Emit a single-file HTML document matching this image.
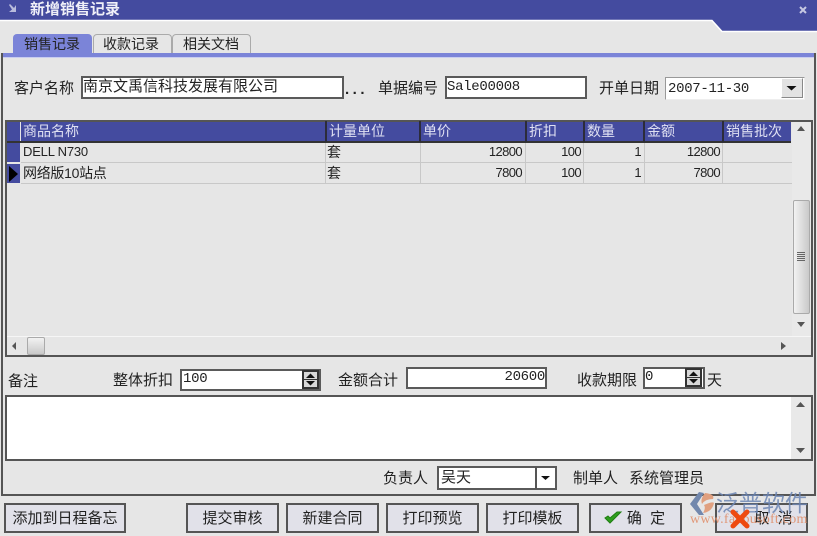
<!DOCTYPE html>
<html lang="zh"><head><meta charset="utf-8"><style>
html,body{margin:0;padding:0;background:#e6e6e6}
body{width:817px;height:536px;position:relative;overflow:hidden;background:#e6e6e6;font-family:"Liberation Sans","WenQuanYi Zen Hei","Noto Sans CJK SC",sans-serif;font-size:15px;color:#222}
#w{position:absolute;left:0;top:0;width:817px;height:536px;overflow:hidden;filter:blur(.3px)}
.a{position:absolute;box-sizing:border-box}
.t{position:absolute;white-space:nowrap;line-height:16px;height:16px}
.f{position:absolute;box-sizing:border-box;background:#fff;border:2px solid #5a5a5a}
.m{font-family:'Liberation Mono',monospace;font-size:14px;letter-spacing:-.3px}
.hd{position:absolute;top:122px;height:19px;background:#444b9f;color:#dfe0f2;font-size:14px;line-height:18px;padding-left:2px;box-sizing:border-box;white-space:nowrap;overflow:hidden}
.hs{position:absolute;top:121px;width:2px;height:21px;background:#2c2c3a}
.c{position:absolute;font-size:14px;line-height:20px;height:20px;white-space:nowrap;color:#222}
.e{font-size:13px;letter-spacing:-.2px}
.r{text-align:right;font-size:13px;letter-spacing:-.6px}
.b{position:absolute;top:503px;height:30px;box-sizing:border-box;background:#e1e1e9;border:2px solid #555;text-align:center;font-size:15px;line-height:27px;color:#222;white-space:nowrap}
.sp{position:absolute;width:17px;height:19px;background:#d8d8d8;border:2px solid #333;box-sizing:border-box}
</style></head><body><div id="w">
<svg class="a" style="left:0;top:0" width="817" height="34"><polygon points="0,0 817,0 817,31 722,31 712,20 0,20" fill="#444b9f"/><polyline points="0,20.5 712,20.5 722,31.5 817,31.5" fill="none" stroke="#fff" stroke-width="1.5"/>
<path d="M10 4 L14 8 L16 5 L16 12 L9 12 L12 9.5 L9 5Z" fill="#b9bcdc"/><path d="M800 7 L806 13 M806 7 L800 13" stroke="#c6c8e2" stroke-width="2"/></svg>
<div class="t" style="left:30px;top:2px;color:#f0f0f8;font-weight:bold;font-size:15px">新增销售记录</div>

<div class="a" style="left:93px;top:34px;width:79px;height:20px;background:#e6e6e6;border:1px solid #aaa;border-bottom:0;border-radius:4px 4px 0 0"></div>
<div class="a" style="left:172px;top:34px;width:79px;height:20px;background:#e6e6e6;border:1px solid #aaa;border-bottom:0;border-radius:4px 4px 0 0"></div>
<div class="a" style="left:13px;top:34px;width:79px;height:20px;background:#7b84d8;border-radius:4px 4px 0 0"></div>
<div class="t" style="left:24px;top:36px;font-size:14px">销售记录</div>
<div class="t" style="left:103px;top:36px;font-size:14px">收款记录</div>
<div class="t" style="left:183px;top:36px;font-size:14px">相关文档</div>
<div class="a" style="left:2px;top:53px;width:813px;height:4px;background:#7b84d8"></div>
<div class="a" style="left:2px;top:57px;width:813px;height:1px;background:#c9cdf0"></div>
<div class="a" style="left:1px;top:53px;width:2px;height:443px;background:#555"></div>
<div class="a" style="left:814px;top:53px;width:2px;height:443px;background:#555"></div>
<div class="a" style="left:1px;top:494px;width:815px;height:2px;background:#555"></div>

<div class="t" style="left:14px;top:81px">客户名称</div>
<div class="f" style="left:81px;top:76px;width:263px;height:23px"></div>
<div class="t" style="left:83px;top:79px">南京文禹信科技发展有限公司</div>
<div class="t" style="left:345px;top:82px;font-size:15px;font-weight:bold;letter-spacing:3.5px">...</div>
<div class="t" style="left:378px;top:81px">单据编号</div>
<div class="f" style="left:445px;top:76px;width:142px;height:23px"></div>
<div class="t m" style="left:447px;top:79px">Sale00008</div>
<div class="t" style="left:599px;top:81px">开单日期</div>
<div class="a" style="left:665px;top:77px;width:140px;height:23px;background:#fff;border:1px solid #999;border-bottom-color:#eee;border-right-color:#eee"></div>
<div class="t m" style="left:668px;top:81px">2007-11-30</div>
<div class="a" style="left:781px;top:78px;width:22px;height:20px;background:#e2e2e2;border:1px solid #fff;border-right-color:#888;border-bottom-color:#888"></div>
<svg class="a" style="left:781px;top:78px" width="22" height="20"><polygon points="5.500,8 15.500,8 10.500,12.500" fill="#111"/></svg>

<div class="a" style="left:5px;top:120px;width:808px;height:237px;border:2px solid #555;background:#e6e6e6"></div>
<div class="a" style="left:7px;top:122px;width:13px;height:19px;background:#444b9f"></div>
<div class="a" style="left:7px;top:143px;width:13px;height:19px;background:#444b9f"></div>
<div class="a" style="left:7px;top:164px;width:13px;height:19px;background:#444b9f"></div>
<svg class="a" style="left:9px;top:166px" width="10" height="16"><polygon points="0,0 9,8 0,16" fill="#000"/></svg>
<div class="hd" style="left:21px;width:304px">商品名称</div>
<div class="hd" style="left:327px;width:92px">计量单位</div>
<div class="hd" style="left:421px;width:104px">单价</div>
<div class="hd" style="left:527px;width:56px">折扣</div>
<div class="hd" style="left:585px;width:58px">数量</div>
<div class="hd" style="left:645px;width:77px">金额</div>
<div class="hd" style="left:724px;width:67px">销售批次</div>
<div class="a" style="left:7px;top:141px;width:784px;height:2px;background:#333"></div>
<div class="hs" style="left:325px"></div><div class="hs" style="left:419px"></div><div class="hs" style="left:525px"></div><div class="hs" style="left:583px"></div><div class="hs" style="left:643px"></div><div class="hs" style="left:722px"></div>
<div class="a" style="left:21px;top:162px;width:771px;height:1px;background:#c8c8c8"></div>
<div class="a" style="left:21px;top:183px;width:771px;height:1px;background:#c8c8c8"></div>
<div class="a" style="left:325px;top:143px;width:1px;height:41px;background:#c8c8c8"></div>
<div class="a" style="left:420px;top:143px;width:1px;height:41px;background:#c8c8c8"></div>
<div class="a" style="left:525px;top:143px;width:1px;height:41px;background:#c8c8c8"></div>
<div class="a" style="left:583px;top:143px;width:1px;height:41px;background:#c8c8c8"></div>
<div class="a" style="left:644px;top:143px;width:1px;height:41px;background:#c8c8c8"></div>
<div class="a" style="left:722px;top:143px;width:1px;height:41px;background:#c8c8c8"></div>
<div class="c e" style="left:23px;top:142px">DELL N730</div>
<div class="c" style="left:23px;top:163px;letter-spacing:-.3px">网络版10站点</div>
<div class="c" style="left:327px;top:142px">套</div>
<div class="c" style="left:327px;top:163px">套</div>
<div class="c r" style="left:421px;width:101px;top:142px">12800</div>
<div class="c r" style="left:421px;width:101px;top:163px">7800</div>
<div class="c r" style="left:526px;width:55px;top:142px">100</div>
<div class="c r" style="left:526px;width:55px;top:163px">100</div>
<div class="c r" style="left:584px;width:57px;top:142px">1</div>
<div class="c r" style="left:584px;width:57px;top:163px">1</div>
<div class="c r" style="left:645px;width:75px;top:142px">12800</div>
<div class="c r" style="left:645px;width:75px;top:163px">7800</div>

<div class="a" style="left:792px;top:122px;width:19px;height:215px;background:#e9e9e9"></div>
<svg class="a" style="left:792px;top:122px" width="19" height="215"><polygon points="5,9 13,9 9,4" fill="#555"/><polygon points="5,200 13,200 9,205" fill="#555"/></svg>
<div class="a" style="left:793px;top:200px;width:17px;height:114px;border:1px solid #aaa;border-radius:2px;background:linear-gradient(90deg,#f2f2f2,#c9c9c9)"></div>
<div class="a" style="left:797px;top:252px;width:8px;height:9px;background:repeating-linear-gradient(#666 0 1px,transparent 1px 2px)"></div>
<div class="a" style="left:7px;top:336px;width:804px;height:1px;background:#f6f6f6"></div>
<svg class="a" style="left:7px;top:337px" width="804" height="18"><polygon points="9,5 9,13 5,9" fill="#555"/><polygon points="774,5 774,13 779,9" fill="#555"/></svg>
<div class="a" style="left:27px;top:337px;width:18px;height:18px;border:1px solid #aaa;border-radius:2px;background:linear-gradient(#f2f2f2,#c9c9c9)"></div>

<div class="t" style="left:8px;top:374px">备注</div>
<div class="t" style="left:113px;top:373px">整体折扣</div>
<div class="f" style="left:180px;top:369px;width:141px;height:22px"></div>
<div class="t m" style="left:183px;top:371px">100</div>
<div class="sp" style="left:302px;top:370px"></div>
<svg class="a" style="left:302px;top:370px" width="17" height="19"><path d="M2 9.500H15" stroke="#333"/><polygon points="4,8 13,8 8.500,3.500" fill="#111"/><polygon points="4,11 13,11 8.500,15.500" fill="#111"/></svg>
<div class="t" style="left:338px;top:373px">金额合计</div>
<div class="f" style="left:406px;top:367px;width:141px;height:22px"></div>
<div class="t m" style="left:500px;top:369px;width:45px;text-align:right">20600</div>
<div class="t" style="left:577px;top:373px">收款期限</div>
<div class="f" style="left:643px;top:367px;width:62px;height:22px"></div>
<div class="t m" style="left:645px;top:369px">0</div>
<div class="sp" style="left:685px;top:368px"></div>
<svg class="a" style="left:685px;top:368px" width="17" height="19"><path d="M2 9.500H15" stroke="#333"/><polygon points="4,8 13,8 8.500,3.500" fill="#111"/><polygon points="4,11 13,11 8.500,15.500" fill="#111"/></svg>
<div class="t" style="left:707px;top:373px">天</div>
<div class="a" style="left:5px;top:395px;width:808px;height:66px;background:#fff;border:2px solid #555"></div>
<div class="a" style="left:791px;top:397px;width:20px;height:62px;background:#e9e9e9"></div>
<svg class="a" style="left:791px;top:397px" width="20" height="62"><polygon points="5,10 14,10 9.500,5" fill="#555"/><polygon points="5,51 14,51 9.500,56" fill="#555"/></svg>
<div class="t" style="left:383px;top:471px">负责人</div>
<div class="f" style="left:437px;top:466px;width:120px;height:24px"></div>
<div class="t" style="left:441px;top:470px">吴天</div>
<div class="a" style="left:535px;top:467px;width:2px;height:22px;background:#555"></div>
<svg class="a" style="left:537px;top:468px" width="18" height="20"><polygon points="4,8 13,8 8.500,12" fill="#111"/></svg>
<div class="t" style="left:573px;top:471px">制单人</div>
<div class="t" style="left:629px;top:471px">系统管理员</div>

<div class="b" style="left:4px;width:122px">添加到日程备忘</div>
<div class="b" style="left:186px;width:93px">提交审核</div>
<div class="b" style="left:286px;width:93px">新建合同</div>
<div class="b" style="left:386px;width:93px">打印预览</div>
<div class="b" style="left:486px;width:93px">打印模板</div>
<div class="b" style="left:589px;width:93px;padding-left:21px">确&nbsp;&nbsp;定</div>
<svg class="a" style="left:603px;top:509px" width="20" height="18"><path d="M2 9 L7 14 L18 3 L14 3 L7 9 L5 7Z" fill="#2f9e1e" stroke="#1e7d12" stroke-width="1"/></svg>
<div class="b" style="left:715px;width:93px;padding-left:24px">取&nbsp;&nbsp;消</div>
<div class="t" style="left:716px;top:489px;font-size:23px;line-height:28px;height:28px;color:#6d86b4;opacity:.85">泛普软件</div>
<div class="t" style="left:690px;top:512px;font-family:'Liberation Serif',serif;font-size:14px;color:#e0906c;letter-spacing:.25px;opacity:.9">www.fanpusoft.com</div>
<svg class="a" style="left:689px;top:490px" width="28" height="28"><path d="M10 2 L1 14 L10 25 L15 25 L8 14 L15 3Z" fill="#7288ad"/><path d="M16 3 Q26 4 24 9 Q16 9 13 14 Q11 9 16 3Z M15 15 Q24 11 25 13 Q23 22 14 23 Q17 18 15 15Z" fill="#e0a080"/></svg>
<svg class="a" style="left:729px;top:508px" width="22" height="22"><path d="M4 4 L18 18 M18 4 L4 18" stroke="#ee4a10" stroke-width="5" stroke-linecap="round"/></svg>
</div></body></html>
